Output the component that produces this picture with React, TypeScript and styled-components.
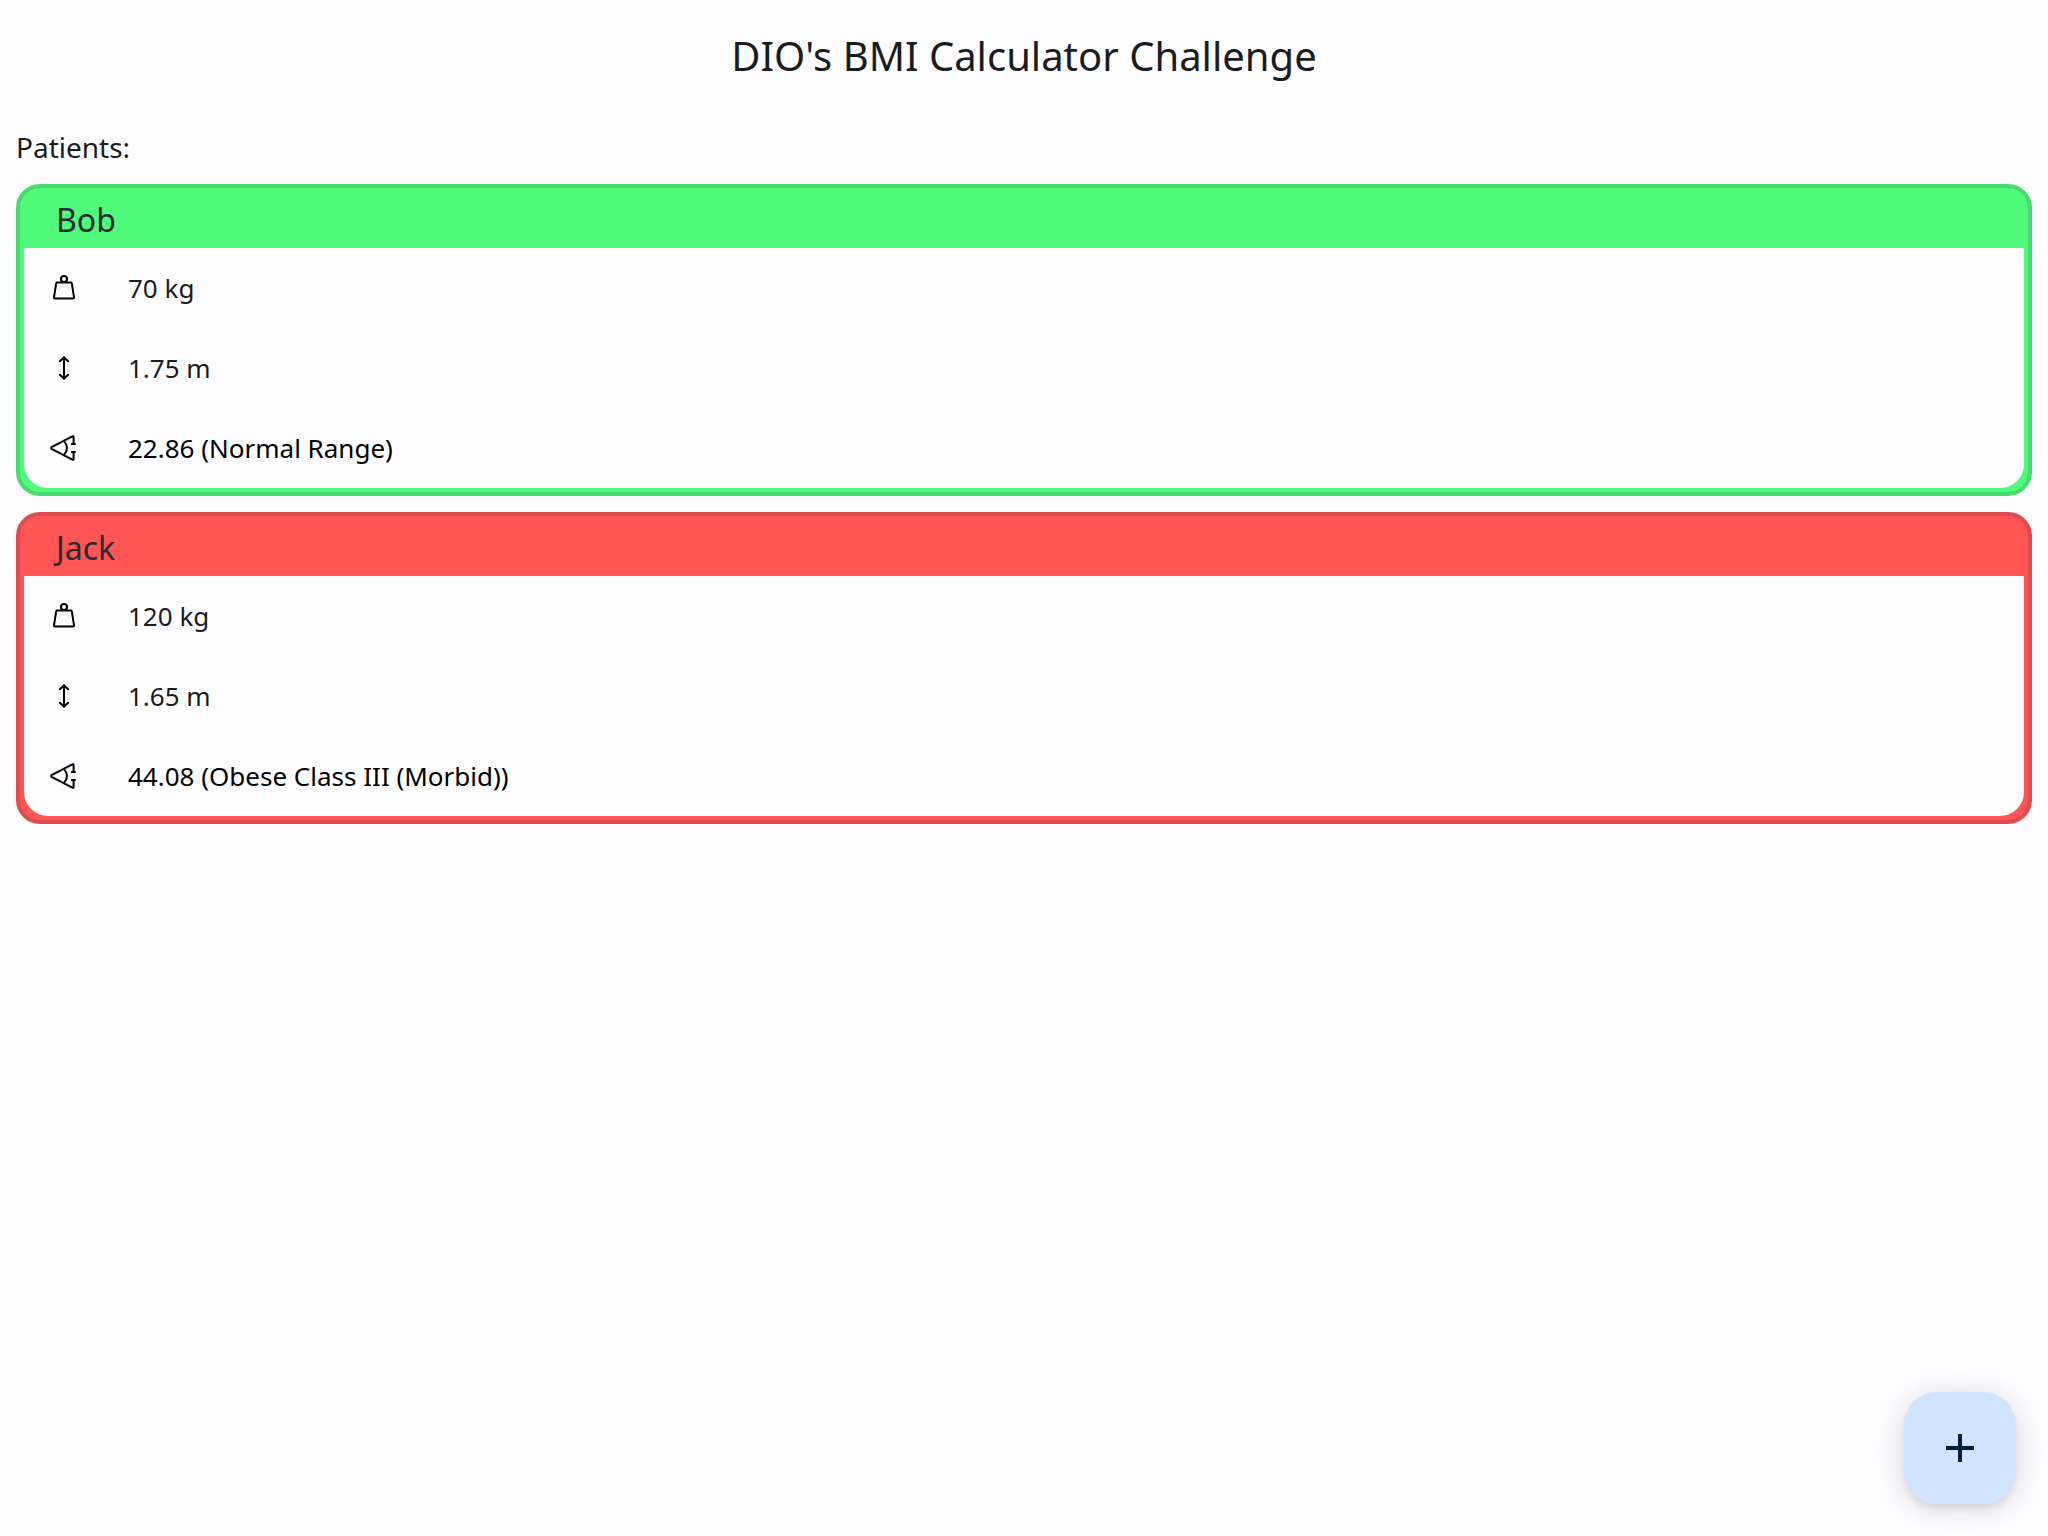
import React from "react";
import styled, { createGlobalStyle } from "styled-components";

const GlobalStyle = createGlobalStyle`
  *, *::before, *::after { box-sizing: border-box; }
  body {
    margin: 0;
    background: #fdfcff;
    color: #1a1c1e;
    font-family: "Noto Sans", "Open Sans", sans-serif;
  }
`;

const Page = styled.div`
  display: flex;
  flex-direction: column;
  min-height: 100vh;
`;

const TopBar = styled.header`
  display: flex;
  align-items: center;
  justify-content: center;
  min-height: 112px;
`;

const AppTitle = styled.h1`
  margin: 0;
  font-size: 40px;
  line-height: 56px;
  font-weight: 400;
`;

const Content = styled.main`
  padding: 14px 16px;
`;

const ListLabel = styled.h2`
  margin: 0 0 16px;
  font-size: 28px;
  line-height: 42px;
  font-weight: 400;
`;

const PatientList = styled.div`
  display: flex;
  flex-direction: column;
  gap: 16px;
`;

const Card = styled.article<{ $fill: string; $edge: string }>`
  padding: 0 4px 4px;
  border: 4px solid ${(p) => p.$edge};
  border-radius: 24px;
  background: ${(p) => p.$fill};
`;

const PatientName = styled.h3`
  margin: 0;
  padding: 4px 32px 0;
  font-size: 32px;
  line-height: 56px;
  font-weight: 400;
  color: #282a36;
`;

const Measures = styled.ul`
  margin: 0;
  padding: 0;
  list-style: none;
  background: #fdfcff;
  border-radius: 0 0 24px 24px;
`;

const Measure = styled.li<{ $strong?: boolean }>`
  display: flex;
  align-items: center;
  gap: 48px;
  min-height: 80px;
  padding: 0 24px;
  font-size: 26px;
  line-height: 36px;
  color: ${(p) => (p.$strong ? "#000000" : "#1a1c1e")};
`;

const Glyph = styled.svg`
  flex: none;
  width: 32px;
  height: 32px;
  fill: none;
  stroke: #000000;
  stroke-width: 2;
  stroke-linecap: round;
  stroke-linejoin: round;
`;

const AddButton = styled.button`
  position: fixed;
  right: 32px;
  bottom: 32px;
  display: flex;
  align-items: center;
  justify-content: center;
  width: 112px;
  height: 112px;
  padding: 0;
  border: 0;
  border-radius: 32px;
  background: #d1e4ff;
  color: #001d36;
  cursor: pointer;
  box-shadow: 0 6px 10px -2px rgba(0, 0, 0, 0.1), 0 4px 32px rgba(0, 0, 0, 0.14);
`;

const PlusIcon = styled.svg`
  width: 48px;
  height: 48px;
  fill: currentColor;
`;

const WeightIcon = () => (
  <Glyph viewBox="0 0 32 32" aria-hidden="true">
    <circle cx="16" cy="7" r="3" />
    <path d="M9 10.5h14q.7 0 .8.8L26 25.2q.1 1.3-1 1.3H7q-1.100 0-1-1.300L8.200 11.300q.1-.8.8-.8z" />
  </Glyph>
);

const HeightIcon = () => (
  <Glyph viewBox="0 0 32 32" aria-hidden="true">
    <path d="M16 5.500v21M11.800 9.300L16 5.300l4.200 4M11.800 22.700l4.200 4 4.200-4" />
  </Glyph>
);

const IndexIcon = () => (
  <Glyph viewBox="0 0 32 32" aria-hidden="true" strokeWidth="2">
    <path d="M23.800 12h3.200M25.600 12V5q0-1.200-1.200-.7L4 14.800q-2 1.200 0 2.400l20.400 10.500q1.200.5 1.200-.7V20M23.800 20h3.200" />
    <path d="M16 9.200q6 6.800 0 13.600" />
  </Glyph>
);

const patients = [
  { name: "Bob", weight: "70 kg", height: "1.75 m", bmi: "22.86 (Normal Range)", fill: "#50fa7b", edge: "#49da6f" },
  { name: "Jack", weight: "120 kg", height: "1.65 m", bmi: "44.08 (Obese Class III (Morbid))", fill: "#ff5555", edge: "#de4c4e" },
];

export default function App() {
  return (
    <Page>
      <GlobalStyle />
      <TopBar>
        <AppTitle>DIO's BMI Calculator Challenge</AppTitle>
      </TopBar>
      <Content>
        <ListLabel>Patients:</ListLabel>
        <PatientList>
          {patients.map((p) => (
            <Card key={p.name} $fill={p.fill} $edge={p.edge}>
              <PatientName>{p.name}</PatientName>
              <Measures>
                <Measure>
                  <WeightIcon />
                  <span>{p.weight}</span>
                </Measure>
                <Measure>
                  <HeightIcon />
                  <span>{p.height}</span>
                </Measure>
                <Measure $strong>
                  <IndexIcon />
                  <span>{p.bmi}</span>
                </Measure>
              </Measures>
            </Card>
          ))}
        </PatientList>
      </Content>
      <AddButton type="button" aria-label="Add patient">
        <PlusIcon viewBox="0 0 24 24" aria-hidden="true">
          <path d="M19 13h-6v6h-2v-6H5v-2h6V5h2v6h6v2z" />
        </PlusIcon>
      </AddButton>
    </Page>
  );
}
